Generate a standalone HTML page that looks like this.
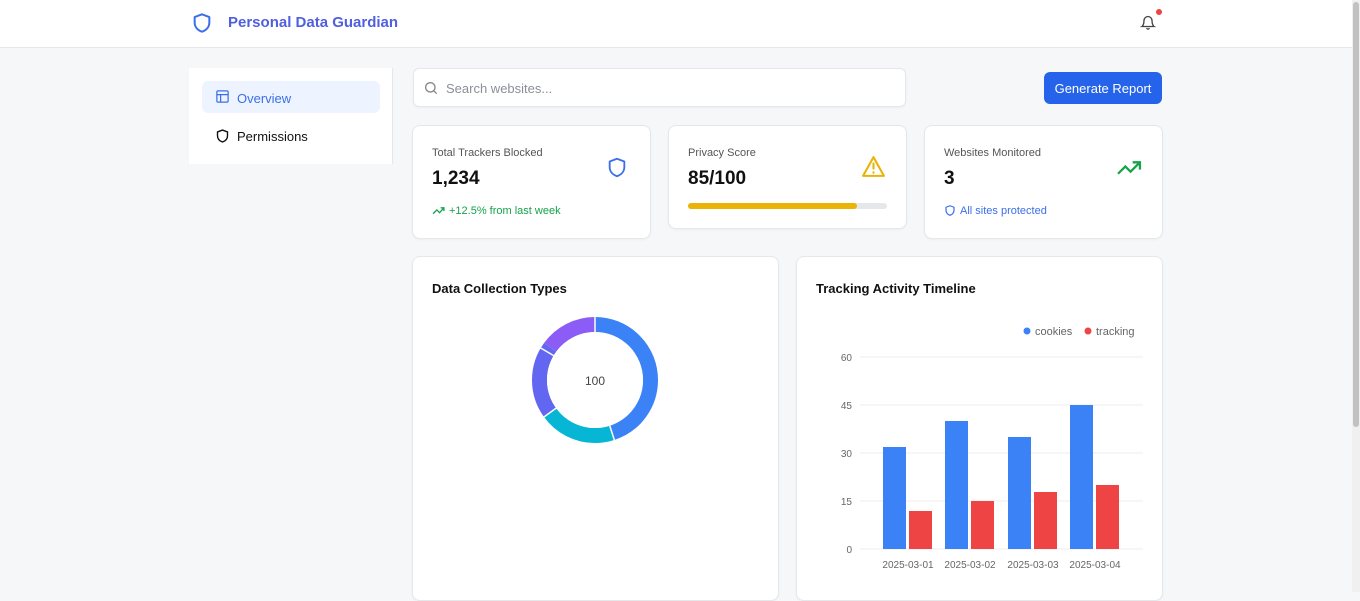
<!DOCTYPE html>
<html><head><meta charset="utf-8"><style>
*{box-sizing:border-box;margin:0;padding:0}
body{width:1360px;height:592px;overflow:hidden;background:#f6f7f9;font-family:"Liberation Sans",sans-serif;position:relative}
.hdr{position:absolute;left:0;top:0;width:1352px;height:48px;background:#fff;border-bottom:1px solid #e5e7eb}
.card{position:absolute;background:#fff;border:1px solid #e5e7eb;border-radius:8px;box-shadow:0 1px 2px rgba(0,0,0,.04)}
.t{position:absolute;white-space:nowrap}
</style></head><body>
<div class="hdr">
<svg style="position:absolute;left:191px;top:11px" width="22" height="24" viewBox="0 0 24 24" fill="none" stroke="#3b6fe8" stroke-width="2.2" stroke-linejoin="round"><path d="M12 2.5l8 3v6c0 5-3.5 8.5-8 10-4.5-1.5-8-5-8-10v-6z"/></svg>
<div class="t" style="left:228px;top:14px;font-size:15px;font-weight:bold;color:#4f5fe0">Personal Data Guardian</div>
<svg style="position:absolute;left:1140px;top:14px" width="16" height="17" viewBox="0 0 24 24" fill="none" stroke="#444" stroke-width="2" stroke-linecap="round"><path d="M6 9a6 6 0 0 1 12 0c0 7 3 9 3 9H3s3-2 3-9"/><path d="M10.3 21a1.9 1.9 0 0 0 3.4 0"/></svg>
<div style="position:absolute;left:1156px;top:9px;width:6px;height:6px;border-radius:50%;background:#ef4444"></div>
</div>
<div style="position:absolute;left:1352px;top:0;width:8px;height:592px;background:#f0f0f0"></div>
<div style="position:absolute;left:1353px;top:2px;width:6px;height:425px;background:#c1c1c1;border-radius:3px"></div>

<div style="position:absolute;left:189px;top:68px;width:204px;height:96px;background:#fff;border-right:1px solid #e5e7eb"></div>
<div style="position:absolute;left:202px;top:81px;width:178px;height:32px;background:#eef4ff;border-radius:6px"></div>
<svg style="position:absolute;left:215px;top:89px" width="15" height="15" viewBox="0 0 24 24" fill="none" stroke="#3b6fe8" stroke-width="2"><rect x="3" y="3" width="18" height="18" rx="2"/><path d="M3 9h18M9 9v12"/></svg>
<div class="t" style="left:237px;top:91px;font-size:13px;color:#3b6fe8">Overview</div>
<svg style="position:absolute;left:215px;top:128px" width="15" height="16" viewBox="0 0 24 24" fill="none" stroke="#111" stroke-width="2.2" stroke-linejoin="round"><path d="M12 2.5l8 3v6c0 5-3.5 8.5-8 10-4.5-1.5-8-5-8-10v-6z"/></svg>
<div class="t" style="left:237px;top:129px;font-size:13px;color:#111">Permissions</div>

<div class="card" style="left:413px;top:68px;width:493px;height:39px;border-radius:6px"></div>
<svg style="position:absolute;left:423px;top:80px" width="16" height="16" viewBox="0 0 24 24" fill="none" stroke="#888" stroke-width="2" stroke-linecap="round"><circle cx="11" cy="11" r="7"/><path d="M20 20l-4-4"/></svg>
<div class="t" style="left:446px;top:81px;font-size:13px;color:#8a8f98">Search websites...</div>
<div style="position:absolute;left:1044px;top:72px;width:118px;height:32px;background:#2563eb;border-radius:6px;color:#fff;font-size:13px;text-align:center;line-height:33px">Generate Report</div>

<div class="card" style="left:412px;top:125px;width:239px;height:114px"></div>
<div class="t" style="left:432px;top:147px;font-size:11px;color:#555">Total Trackers Blocked</div>
<div class="t" style="left:432px;top:168px;font-size:19px;font-weight:bold;color:#111">1,234</div>
<svg style="position:absolute;left:606px;top:155px" width="22" height="25" viewBox="0 0 24 24" fill="none" stroke="#3b6fe8" stroke-width="2" stroke-linejoin="round"><path d="M12 2.5l8 3v6c0 5-3.5 8.5-8 10-4.5-1.5-8-5-8-10v-6z"/></svg>
<svg style="position:absolute;left:432px;top:205px" width="13" height="11" viewBox="0 0 24 20" fill="none" stroke="#16a34a" stroke-width="2.4"><path d="M2 16l7-7 5 5 8-9M16 5h6v6"/></svg>
<div class="t" style="left:449px;top:205px;font-size:11px;color:#16a34a">+12.5% from last week</div>

<div class="card" style="left:668px;top:125px;width:239px;height:104px"></div>
<div class="t" style="left:688px;top:147px;font-size:11px;color:#555">Privacy Score</div>
<div class="t" style="left:688px;top:168px;font-size:19px;font-weight:bold;color:#111">85/100</div>
<svg style="position:absolute;left:861px;top:155px" width="25" height="23" viewBox="0 0 24 22" fill="none" stroke="#eab308" stroke-width="2" stroke-linejoin="round" stroke-linecap="round"><path d="M12 2L22 20H2z"/><path d="M12 8v5M12 16.5v.5"/></svg>
<div style="position:absolute;left:688px;top:203px;width:199px;height:6px;background:#e5e7eb;border-radius:3px"><div style="width:169px;height:6px;background:#eab308;border-radius:3px"></div></div>

<div class="card" style="left:924px;top:125px;width:239px;height:114px"></div>
<div class="t" style="left:944px;top:147px;font-size:11px;color:#555">Websites Monitored</div>
<div class="t" style="left:944px;top:168px;font-size:19px;font-weight:bold;color:#111">3</div>
<svg style="position:absolute;left:1117px;top:159px" width="25" height="17" viewBox="0 0 24 16" fill="none" stroke="#16a34a" stroke-width="2.2"><path d="M1 14l7-7 5 5 9-9M15 3h7v7"/></svg>
<svg style="position:absolute;left:944px;top:204px" width="12" height="13" viewBox="0 0 24 24" fill="none" stroke="#3b6fe8" stroke-width="2.4" stroke-linejoin="round"><path d="M12 2.5l8 3v6c0 5-3.5 8.5-8 10-4.5-1.5-8-5-8-10v-6z"/></svg>
<div class="t" style="left:960px;top:205px;font-size:11px;color:#3b6fe8">All sites protected</div>

<div class="card" style="left:412px;top:256px;width:367px;height:345px"></div>
<div class="t" style="left:432px;top:281px;font-size:13px;font-weight:bold;color:#111">Data Collection Types</div>
<svg style="position:absolute;left:520px;top:305px" width="150" height="150" viewBox="0 0 150 150">
<g transform="rotate(-90 75 75)" fill="none" stroke-width="15">
<circle cx="75" cy="75" r="55.5" stroke="#3b82f6" stroke-dasharray="156.9 400" stroke-dashoffset="0"/>
<circle cx="75" cy="75" r="55.5" stroke="#06b6d4" stroke-dasharray="69.7 400" stroke-dashoffset="-156.9"/>
<circle cx="75" cy="75" r="55.5" stroke="#6366f1" stroke-dasharray="69.7 400" stroke-dashoffset="-226.6"/>
<circle cx="75" cy="75" r="55.5" stroke="#8b5cf6" stroke-dasharray="52.3 400" stroke-dashoffset="-296.3"/>
</g>
<g stroke="#fff" stroke-width="1.5"><line x1="75" y1="75" x2="75" y2="10"/><line x1="75" y1="75" x2="95" y2="137"/><line x1="75" y1="75" x2="17" y2="117"/><line x1="75" y1="75" x2="19" y2="42"/></g>
<circle cx="75" cy="75" r="48" fill="#fff"/>
<text x="75" y="80" text-anchor="middle" font-size="12" fill="#444" font-family="Liberation Sans">100</text>
</svg>

<div class="card" style="left:796px;top:256px;width:367px;height:345px"></div>
<div class="t" style="left:816px;top:281px;font-size:13px;font-weight:bold;color:#111">Tracking Activity Timeline</div>
<svg style="position:absolute;left:800px;top:310px" width="360" height="280" viewBox="0 0 360 280" font-family="Liberation Sans" font-size="10" fill="#666">
<circle cx="227" cy="21" r="3.5" fill="#3b82f6"/><text x="235" y="25" font-size="11">cookies</text>
<circle cx="288" cy="21" r="3.5" fill="#ef4444"/><text x="296" y="25" font-size="11">tracking</text>
<g stroke="#eceef1"><line x1="60" y1="47" x2="343" y2="47"/><line x1="60" y1="95" x2="343" y2="95"/><line x1="60" y1="143" x2="343" y2="143"/><line x1="60" y1="191" x2="343" y2="191"/><line x1="60" y1="239" x2="343" y2="239"/></g>
<g text-anchor="end"><text x="52" y="51">60</text><text x="52" y="99">45</text><text x="52" y="147">30</text><text x="52" y="195">15</text><text x="52" y="243">0</text></g>
<g fill="#3b82f6"><rect x="83" y="137" width="23" height="102"/><rect x="145" y="111" width="23" height="128"/><rect x="208" y="127" width="23" height="112"/><rect x="270" y="95" width="23" height="144"/></g>
<g fill="#ef4444"><rect x="109" y="201" width="23" height="38"/><rect x="171" y="191" width="23" height="48"/><rect x="234" y="182" width="23" height="57"/><rect x="296" y="175" width="23" height="64"/></g>
<g text-anchor="middle"><text x="108" y="258">2025-03-01</text><text x="170" y="258">2025-03-02</text><text x="233" y="258">2025-03-03</text><text x="295" y="258">2025-03-04</text></g>
</svg>
</body></html>
